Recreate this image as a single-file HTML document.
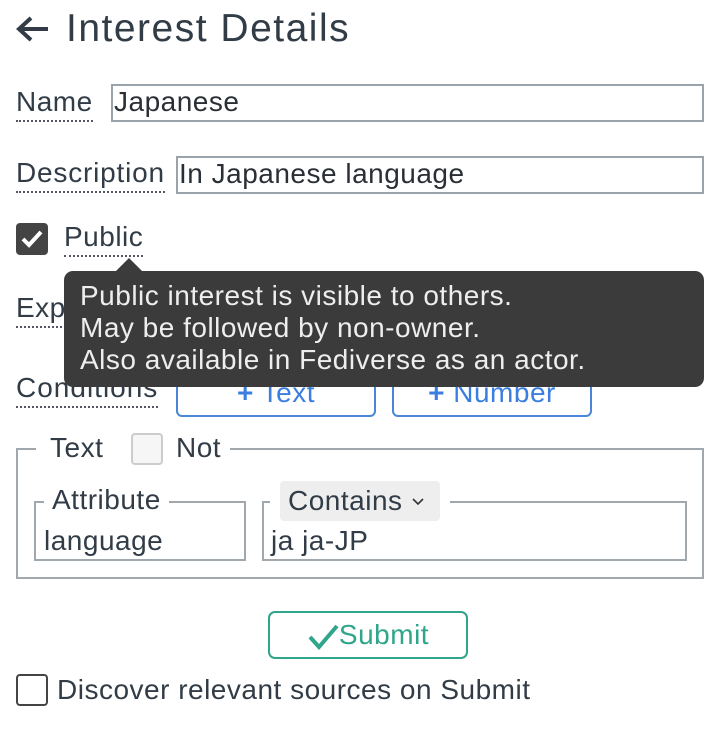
<!DOCTYPE html>
<html><head><meta charset="utf-8"><style>
body{margin:0;width:720px;height:733px;background:#fff;font-family:"Liberation Sans",sans-serif;color:#313c47;position:relative;overflow:hidden;letter-spacing:0.5px}
.a{position:absolute;white-space:nowrap}
.lbl{font-size:28px;line-height:32px;border-bottom:2px dotted #556;padding-bottom:2px}
.inp{position:absolute;border:2px solid #9aa3aa;box-sizing:border-box;font-size:28px;line-height:32px;padding-left:1px;color:#2a2f35}
.btn{position:absolute;border:2px solid #4a86d8;border-radius:6px;box-sizing:border-box;color:#3a7ee0;font-size:28px;text-align:center}
.fs{position:absolute;border:2px solid #a0a8ae;box-sizing:border-box}
.cb{position:absolute;box-sizing:border-box;border-radius:4px}
</style></head><body>
<div class="a" style="left:16px;top:7px;font-size:39px;line-height:44px;letter-spacing:1.5px">
<svg width="34" height="26" viewBox="0 0 34 26" style="vertical-align:-1px;margin-right:16px"><path d="M32 13H4M15 2L3 13l12 11" fill="none" stroke="#313c47" stroke-width="4"/></svg>Interest Details</div>

<div class="a lbl" style="left:16px;top:86px">Name</div>
<div class="inp" style="left:111px;top:84px;width:593px;height:38px">Japanese</div>

<div class="a lbl" style="left:16px;top:157px;letter-spacing:0.8px">Description</div>
<div class="inp" style="left:176px;top:156px;width:528px;height:38px">In Japanese language</div>

<div class="cb" style="left:16px;top:223px;width:32px;height:32px;background:#444"><svg width="32" height="32"><path d="M7 16l6 6 12-13" fill="none" stroke="#fff" stroke-width="4"/></svg></div>
<div class="a lbl" style="left:64px;top:221px">Public</div>

<div class="a lbl" style="left:16px;top:292px">Exp</div>
<div class="a lbl" style="left:16px;top:372px;letter-spacing:1px">Conditions</div>
<div class="btn" style="left:176px;top:370px;width:200px;height:47px;line-height:42px"><b>+</b> Text</div>
<div class="btn" style="left:392px;top:370px;width:200px;height:47px;line-height:42px"><b>+</b> Number</div>

<div style="position:absolute;left:116px;top:258px;width:0;height:0;border-left:13px solid transparent;border-right:13px solid transparent;border-bottom:13px solid #3b3b3b"></div>
<div style="position:absolute;left:64px;top:271px;width:640px;height:116px;background:#3b3b3b;border-radius:9px;color:#eee;font-size:28px;line-height:32px;padding:9px 0 0 16px;box-sizing:border-box;white-space:nowrap;letter-spacing:0.5px">Public interest is visible to others.<br>May be followed by non-owner.<br>Also available in Fediverse as an actor.</div>

<div class="fs" style="left:16px;top:448px;width:688px;height:131px"></div>
<div class="a" style="left:36px;top:430px;background:#fff;width:194px;height:36px"></div>
<div class="a" style="left:50px;top:430px;font-size:28px;line-height:36px">Text</div>
<div class="cb" style="left:131px;top:433px;width:32px;height:32px;border:2px solid #ccc;background:#f6f6f6"></div>
<div class="a" style="left:176px;top:430px;font-size:28px;line-height:36px">Not</div>

<div class="fs" style="left:34px;top:501px;width:212px;height:60px"></div>
<div class="a" style="left:44px;top:484px;background:#fff;padding:0 8px;font-size:28px;line-height:32px">Attribute</div>
<div class="a" style="left:44px;top:525px;font-size:28px;line-height:32px">language</div>

<div class="fs" style="left:262px;top:501px;width:425px;height:60px"></div>
<div class="a" style="left:270px;top:478px;width:180px;height:46px;background:#fff"></div>
<div class="a" style="left:280px;top:481px;width:160px;height:40px;background:#eee;border-radius:4px;font-size:28px;line-height:40px;padding-left:8px;box-sizing:border-box">Contains <svg width="14" height="10" style="vertical-align:3px"><path d="M2 2l5 5 5-5" fill="none" stroke="#333" stroke-width="1.6"/></svg></div>
<div class="a" style="left:271px;top:525px;font-size:28px;line-height:32px">ja ja-JP</div>

<div style="position:absolute;left:268px;top:611px;width:200px;height:48px;border:2px solid #2fa58c;border-radius:7px;box-sizing:border-box;color:#2fa58c;font-size:28px;line-height:44px;text-align:center"><svg width="32" height="26" style="vertical-align:-6px"><path d="M3 13l9 10L30 2" fill="none" stroke="#2fa58c" stroke-width="4"/></svg>Submit</div>

<div class="cb" style="left:16px;top:674px;width:32px;height:32px;border:2px solid #444"></div>
<div class="a" style="left:57px;top:674px;font-size:28px;line-height:32px">Discover relevant sources on Submit</div>
</body></html>
